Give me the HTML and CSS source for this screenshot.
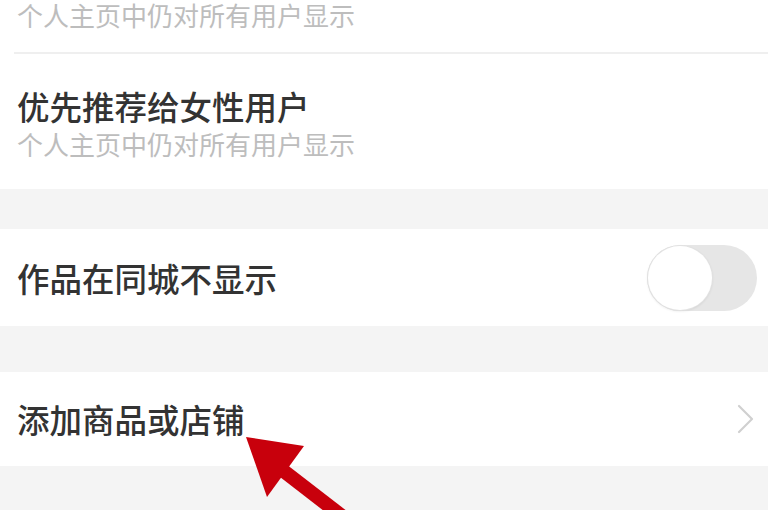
FILE: index.html
```html
<!DOCTYPE html>
<html lang="zh-CN">
<head>
<meta charset="utf-8">
<title>隐私设置</title>
<link rel="stylesheet" href="styles.css">
</head>
<body>
<div class="screen">
  <div class="list">
    <section class="group">
      <div class="item item--first">
        <div class="item-sub">个人主页中仍对所有用户显示</div>
      </div>
      <div class="divider"></div>
      <div class="item">
        <div class="item-title">优先推荐给女性用户</div>
        <div class="item-sub">个人主页中仍对所有用户显示</div>
      </div>
    </section>
    <div class="gap gap--a"></div>
    <section class="group">
      <div class="row row--toggle">
        <span class="row-label">作品在同城不显示</span>
        <span class="switch"><span class="knob"></span></span>
      </div>
    </section>
    <div class="gap gap--b"></div>
    <section class="group">
      <div class="row row--link">
        <span class="row-label">添加商品或店铺</span>
        <svg class="chev" width="22" height="32" viewBox="0 0 22 32"><polyline points="4,3 17,16 4,29" fill="none" stroke="#d0d0d0" stroke-width="2.2" stroke-linecap="round" stroke-linejoin="round"/></svg>
      </div>
    </section>
    <div class="gap gap--c"></div>
  </div>
  <svg class="arrow" width="768" height="510" viewBox="0 0 768 510">
    <line x1="272" y1="462" x2="360" y2="530" stroke="#c8000c" stroke-width="14"/>
    <polygon points="246,437 304,446 267,497" fill="#c8000c"/>
  </svg>
</div>
</body>
</html>
```
FILE: styles.css
```css
* { box-sizing: border-box; }
html, body { margin: 0; padding: 0; }
body {
  width: 768px;
  height: 510px;
  overflow: hidden;
  background: #f4f4f4;
  font-family: "Noto Sans CJK SC", "Noto Sans", sans-serif;
}
.screen {
  position: relative;
  width: 768px;
  height: 510px;
  overflow: hidden;
}
.list {
  display: flex;
  flex-direction: column;
}
.group { background: #ffffff; }
.item {
  padding: 32px 17px 30px;
  display: flex;
  flex-direction: column;
}
.item--first {
  padding-top: 1px;
  padding-bottom: 23px;
}
.item--first .item-sub {
  margin-top: 0;
  line-height: 28px;
}
.item-title {
  font-size: 32.5px;
  line-height: 40px;
  color: #333333;
  font-weight: 500;
}
.item-sub {
  margin-top: 3px;
  font-size: 26px;
  line-height: 30px;
  color: #bdbdbd;
}
.divider {
  height: 2px;
  margin-left: 14px;
  background: #efefef;
}
.gap { background: #f4f4f4; }
.gap--a { height: 40px; }
.gap--b { height: 46px; }
.gap--c { height: 60px; }
.row {
  display: flex;
  align-items: center;
  justify-content: space-between;
  padding: 0 11px 0 17px;
}
.row--toggle { height: 97px; }
.row--link { height: 94px; }
.row-label {
  font-size: 32.5px;
  line-height: 40px;
  color: #333333;
  font-weight: 500;
}
.switch {
  width: 110px;
  height: 66px;
  border-radius: 33px;
  background: #e6e6e6;
  display: flex;
  align-items: center;
  padding: 1px;
}
.knob {
  width: 64px;
  height: 64px;
  border-radius: 50%;
  background: #ffffff;
  box-shadow: 0 0 0 1px #e2e2e2, 0 1px 3px rgba(0,0,0,0.12);
}
.chev { display: block; }
.arrow {
  position: absolute;
  left: 0;
  top: 0;
  pointer-events: none;
}
```
